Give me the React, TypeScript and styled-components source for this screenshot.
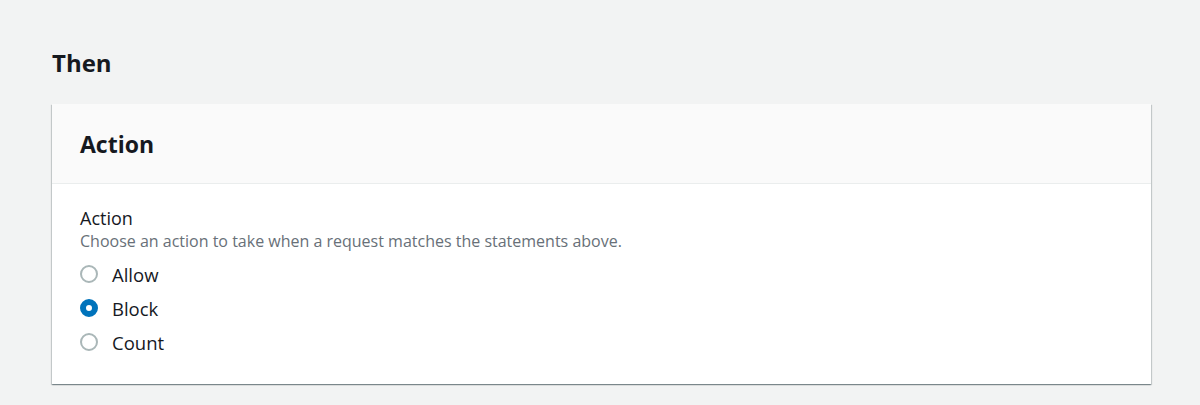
import styled, { createGlobalStyle } from "styled-components"

const GlobalStyle = createGlobalStyle`
    body {
        margin: 0;
        background: #f2f3f3;
        font-family: "Open Sans", "Noto Sans", sans-serif;
        color: #16191f;
    }
`

const Page = styled.main`
    padding: 48px 48px 20px 52px;
`

const Titulo = styled.h2`
    margin: 0 0 26px;
    font-size: 24px;
    line-height: 30px;
    font-weight: 700;
`

const Card = styled.section`
    width: 1099px;
    background: #fff;
    box-shadow: 0 1px 1px 0 rgba(0, 28, 36, 0.3), 1px 1px 1px 0 rgba(0, 28, 36, 0.15), -1px 1px 1px 0 rgba(0, 28, 36, 0.15);
`

const CardHeader = styled.header`
    background: #fafafa;
    border-bottom: 1px solid #eaeded;
    padding: 25px 28px;
    height: 29px;

    h3 {
        margin: 0;
        font-size: 23px;
        line-height: 30px;
        font-weight: 700;
    }
`

const CardBody = styled.div`
    padding: 23px 28px 25px;
`

const Label = styled.div`
    font-size: 18px;
    line-height: 22px;
`

const Descricao = styled.div`
    font-size: 16px;
    line-height: 22px;
    color: #687078;
    margin: 1px 0 5px;
`

const Lista = styled.div`
    display: flex;
    flex-direction: column;
`

const Opcao = styled.label`
    display: flex;
    align-items: center;
    gap: 14px;
    height: 34px;
    font-size: 18.5px;
    font-weight: 500;
`

const Circulo = styled.span<{ $marcado?: boolean }>`
    width: 18px;
    height: 18px;
    box-sizing: border-box;
    border-radius: 50%;
    border: ${(p) => (p.$marcado ? "6px solid #0073bb" : "2px solid #aab7b8")};
    background: #fff;
`

const opcoes = [
    { nome: "Allow", marcado: false },
    { nome: "Block", marcado: true },
    { nome: "Count", marcado: false },
]

export default function App() {
    return (
        <>
            <GlobalStyle />
            <Page>
                <Titulo>Then</Titulo>
                <Card>
                    <CardHeader>
                        <h3>Action</h3>
                    </CardHeader>
                    <CardBody>
                        <Label>Action</Label>
                        <Descricao>Choose an action to take when a request matches the statements above.</Descricao>
                        <Lista>
                            {opcoes.map((o) => (
                                <Opcao key={o.nome}>
                                    <Circulo $marcado={o.marcado} />
                                    {o.nome}
                                </Opcao>
                            ))}
                        </Lista>
                    </CardBody>
                </Card>
            </Page>
        </>
    )
}
